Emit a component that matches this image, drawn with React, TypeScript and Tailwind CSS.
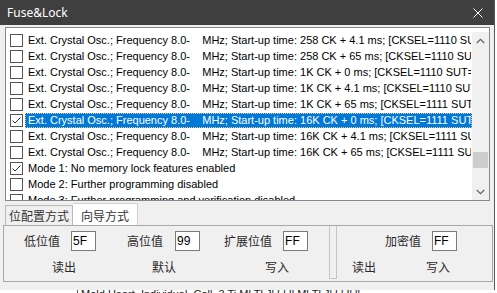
import React from "react";

const P = "Ext. Crystal Osc.; Frequency 8.0-    MHz; Start-up time: ";
const rows: { t: string; checked?: boolean; sel?: boolean }[] = [
  { t: P + "258 CK + 4.1 ms; [CKSEL=1110 SUT=00]" },
  { t: P + "258 CK + 65 ms; [CKSEL=1110 SUT=01]" },
  { t: P + "1K CK + 0 ms; [CKSEL=1110 SUT=10]" },
  { t: P + "1K CK + 4.1 ms; [CKSEL=1110 SUT=11]" },
  { t: P + "1K CK + 65 ms; [CKSEL=1111 SUT=00]" },
  { t: P + "16K CK + 0 ms; [CKSEL=1111 SUT=01]", checked: true, sel: true },
  { t: P + "16K CK + 4.1 ms; [CKSEL=1111 SUT=10]" },
  { t: P + "16K CK + 65 ms; [CKSEL=1111 SUT=11]" },
  { t: "Mode 1: No memory lock features enabled", checked: true },
  { t: "Mode 2: Further programming disabled" },
  { t: "Mode 3: Further programming and verification disabled" },
];

function Check({ checked }: { checked?: boolean }) {
  return (
    <div className="w-[13px] h-[13px] border border-[#555] bg-white shrink-0 flex items-center justify-center">
      {checked && (
        <svg width="11" height="11" viewBox="0 0 11 11">
          <path d="M1.5 5.5 L4 8 L9.5 2.5" fill="none" stroke="#333" strokeWidth="1" />
        </svg>
      )}
    </div>
  );
}

function Field({ v }: { v: string }) {
  return (
    <div className="w-[25px] h-[20px] border border-[#7a7a7a] bg-white flex items-center pl-[1px] text-[12px] text-black font-['Liberation_Sans',sans-serif] shrink-0">
      {v}
    </div>
  );
}

const cjk = "font-['Noto_Sans_CJK_SC',sans-serif] text-[12px] leading-[16px] text-[#2a2a2a] whitespace-nowrap shrink-0";

export default function App() {
  return (
    <div className="w-[497px] h-[293px] bg-white overflow-hidden flex flex-col">
      <div className="w-[495px] h-[290px] bg-[#f0f0f0] border-r border-[#5a5a5a] flex flex-col shrink-0">
        {/* title bar */}
        <div className="h-[25px] bg-[#3f3f3f] flex items-center pl-[7px] shrink-0">
          <span className="text-white text-[12px] font-['Noto_Sans',sans-serif] leading-[16px]">Fuse&amp;Lock</span>
          <div className="flex-1" />
          <svg width="10" height="10" viewBox="0 0 10 10" className="mr-[11px]">
            <path d="M0.5 0.5 L9.5 9.5 M9.5 0.5 L0.5 9.5" stroke="#ffffff" strokeWidth="1" fill="none" />
          </svg>
        </div>

        {/* list box */}
        <div className="mt-[2px] ml-[5px] w-[485px] h-[174px] border border-[#828790] bg-white pt-[4px] pl-[4px] flex shrink-0">
          <div className="flex-1 h-[168px] overflow-hidden font-['Liberation_Sans',sans-serif] text-[11px]">
            {rows.map((r, i) => (
              <div key={i} className="h-[16px] flex items-center">
                <Check checked={r.checked} />
                <div
                  className={
                    "ml-[2px] flex-1 h-[15px] flex items-center pl-[2px] overflow-hidden whitespace-pre leading-[15px] " +
                    (r.sel ? "bg-[#0078d7] text-white border border-dotted border-[#e9c98f]" : "text-black border border-transparent")
                  }
                >
                  {r.t}
                </div>
              </div>
            ))}
          </div>
          {/* scrollbar */}
          <div className="w-[17px] h-[168px] bg-[#f0f0f0] flex flex-col shrink-0">
            <div className="h-[17px] flex items-center justify-center">
              <svg width="9" height="6" viewBox="0 0 9 6">
                <path d="M0.8 5 L4.5 1.3 L8.2 5" stroke="#606060" strokeWidth="1.2" fill="none" />
              </svg>
            </div>
            <div className="flex-1 flex flex-col">
              <div className="h-[103px]" />
              <div className="h-[16px] mx-[1px] bg-[#cdcdcd]" />
            </div>
            <div className="h-[17px] flex items-center justify-center">
              <svg width="9" height="6" viewBox="0 0 9 6">
                <path d="M0.8 1 L4.5 4.7 L8.2 1" stroke="#606060" strokeWidth="1.2" fill="none" />
              </svg>
            </div>
          </div>
        </div>

        {/* tab control */}
        <div className="mt-[2px] ml-[3px] w-[490px] flex flex-col shrink-0">
          <div className="h-[22px] flex items-end pl-[2px]">
            <div className="h-[20px] w-[68px] border border-b-0 border-[#b9b9b9] bg-[#f0f0f0] flex items-center justify-center">
              <span className={cjk + " text-[#333]"}>位配置方式</span>
            </div>
            <div className="h-[22px] w-[65px] border border-l-0 border-b-0 border-[#d0d0d0] bg-white flex items-center justify-center pt-[3px]">
              <span className={cjk + " text-[#333]"}>向导方式</span>
            </div>
          </div>
          <div className="h-[57px] border border-[#a8a8a8] bg-[#f0f0f0] flex">
            {/* left section */}
            <div className="w-[325px] flex flex-col">
              <div className="mt-[5px] h-[20px] flex items-center pl-[20px]">
                <span className={cjk}>低位值</span>
                <div className="ml-[11px]"><Field v="5F" /></div>
                <span className={cjk + " ml-[31px]"}>高位值</span>
                <div className="ml-[12px]"><Field v="99" /></div>
                <span className={cjk + " ml-[24px]"}>扩展位值</span>
                <div className="ml-[11px]"><Field v="FF" /></div>
              </div>
              <div className="mt-[8px] h-[16px] flex items-center pl-[48px]">
                <span className={cjk}>读出</span>
                <span className={cjk + " ml-[76px]"}>默认</span>
                <span className={cjk + " ml-[89px]"}>写入</span>
              </div>
            </div>
            {/* separator */}
            <div className="w-[8px] mb-[2px] border-l border-r border-b border-[#c4c4c4] shrink-0" />
            {/* right section */}
            <div className="flex-1 flex flex-col">
              <div className="mt-[5px] h-[20px] flex items-center pl-[48px]">
                <span className={cjk}>加密值</span>
                <div className="ml-[11px]"><Field v="FF" /></div>
              </div>
              <div className="mt-[8px] h-[16px] flex items-center pl-[15px]">
                <span className={cjk}>读出</span>
                <span className={cjk + " ml-[50px]"}>写入</span>
              </div>
            </div>
          </div>
        </div>
      </div>
      {/* underlying window fragment */}
      <div className="h-[3px] overflow-hidden flex items-start shrink-0">
        <div className="w-[77px]" />
        <div className="w-[1px] h-[3px] bg-[#555]" />
        <div className="ml-[3px] -mt-[1px] text-[11px] leading-[11px] text-[#222] font-['Liberation_Sans',sans-serif] whitespace-nowrap">
          Mold Heart, Individual, Call, 3 Ti Ml  Tl Jl Ll Il Ml Tl Jl Ll Il ll
        </div>
      </div>
    </div>
  );
}
